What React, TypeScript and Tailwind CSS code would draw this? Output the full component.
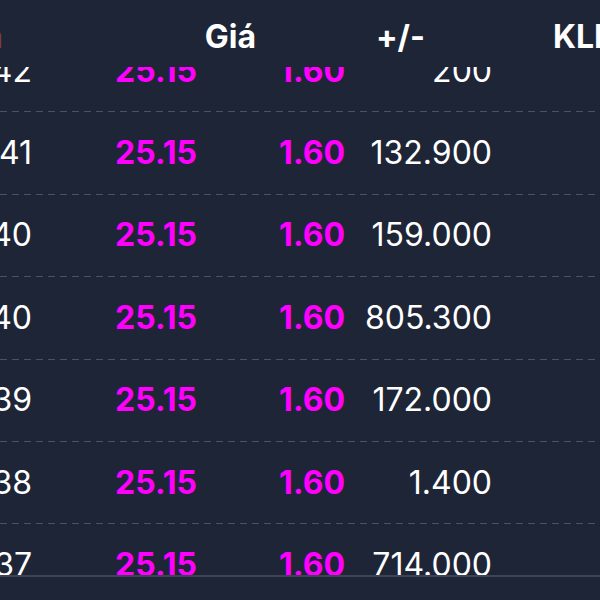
import React from "react"

const rows = [
  { time: "09:15:42", price: "25.15", change: "1.60", vol: "200" },
  { time: "09:15:41", price: "25.15", change: "1.60", vol: "132.900" },
  { time: "09:15:40", price: "25.15", change: "1.60", vol: "159.000" },
  { time: "09:15:40", price: "25.15", change: "1.60", vol: "805.300" },
  { time: "09:15:39", price: "25.15", change: "1.60", vol: "172.000" },
  { time: "09:15:38", price: "25.15", change: "1.60", vol: "1.400" },
  { time: "09:15:37", price: "25.15", change: "1.60", vol: "714.000" },
]

export default function App() {
  return (
    <div className="w-[600px] h-[600px] overflow-hidden bg-[#1e2536] text-white font-['Inter','Liberation_Sans',sans-serif]">
      <div className="h-[575px] overflow-hidden">
        {/* Sticky header */}
        <div className="relative z-10 flex h-[67px] items-center pt-[6px] bg-[#1e2536] text-[32px] font-bold whitespace-nowrap">
          <div className="flex w-[3px] shrink-0 justify-end">
            <span className="text-[#c0504a]/60">Thời gian</span>
          </div>
          <div className="w-[253px] shrink-0 text-right">Giá</div>
          <div className="w-[169px] shrink-0 text-right">+/-</div>
          <div className="shrink-0 pl-[128px]">KLM</div>
        </div>

        {/* Rows */}
        <div className="-mt-[37px]">
          {rows.map((r, i) => (
            <div key={i}>
              <div className="flex h-[81.4px] items-center text-[32px] whitespace-nowrap">
                <div className="flex w-[32px] shrink-0 justify-end font-normal">{r.time}</div>
                <div className="w-[165px] shrink-0 text-right font-bold text-[#ff00ff]">{r.price}</div>
                <div className="w-[148px] shrink-0 text-right font-bold text-[#ff00ff]">{r.change}</div>
                <div className="w-[147px] shrink-0 text-right font-normal">{r.vol}</div>
              </div>
              <div className="h-px bg-[repeating-linear-gradient(90deg,#4a5264_0_7px,transparent_7px_12px)]" />
            </div>
          ))}
        </div>
      </div>
      <div className="h-[2px] bg-[#3c4455]" />
    </div>
  )
}
